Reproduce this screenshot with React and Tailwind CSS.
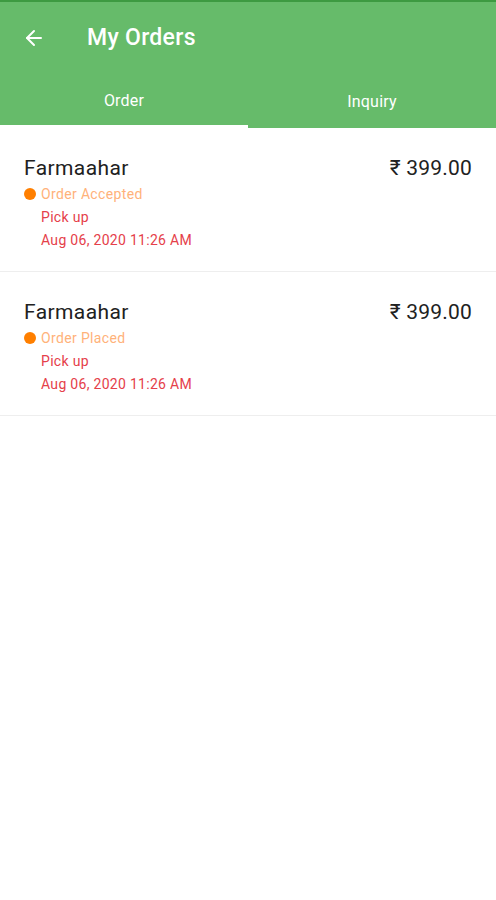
import { ArrowLeft } from "lucide-react";

const orders = [
  { id: 1, name: "Farmaahar", status: "Order Accepted", price: "₹ 399.00", type: "Pick up", date: "Aug 06, 2020 11:26 AM" },
  { id: 2, name: "Farmaahar", status: "Order Placed", price: "₹ 399.00", type: "Pick up", date: "Aug 06, 2020 11:26 AM" },
];

function OrderRow({ order }) {
  return (
    <div className="flex justify-between border-b border-[#eeeeee] pl-6 pr-6 pt-[27px] h-[144px]">
      <div>
        <p className="text-[21px] leading-[26px] tracking-[0.4px] text-[#212121]">{order.name}</p>
        <div className="flex items-center mt-[3px] h-[20px]">
          <span className="w-[12px] h-[12px] rounded-full bg-[#ff7f00] mr-[5px]" />
          <span className="text-[14px] tracking-[0.35px] text-[#ffb27a]">{order.status}</span>
        </div>
        <p className="pl-[17px] text-[14px] leading-[22px] tracking-[0.3px] mt-[2px] text-[#e5404a]">{order.type}</p>
        <p className="pl-[17px] text-[14px] leading-[22px] tracking-[0.3px] mt-[1px] text-[#e5404a]">{order.date}</p>
      </div>
      <p className="text-[21px] leading-[26px] tracking-[0.2px] text-[#212121]">{order.price}</p>
    </div>
  );
}

export default function App() {
  return (
    <div className="w-[496px] h-[900px] bg-white font-['Roboto',sans-serif]">
      {/* Header */}
      <div className="bg-[#66bb6a] border-t-2 border-[#3d9a41]">
        <div className="flex items-center h-[72px] pl-[22px]">
          <ArrowLeft className="w-[24px] h-[24px] text-white" strokeWidth={2} />
          <h1 className="ml-[41px] text-[23px] tracking-[0.3px] font-medium text-white">My Orders</h1>
        </div>
        <div className="grid grid-cols-2 h-[54px]">
          <div className="flex flex-col">
            <div className="flex-1 flex items-center justify-center text-white text-[16px] tracking-[0.2px] pt-[2px]">Order</div>
            <div className="h-[3px] bg-white" />
          </div>
          <div className="flex flex-col">
            <div className="flex-1 flex items-center justify-center text-white text-[16px] tracking-[0.2px] pt-[2px]">Inquiry</div>
            <div className="h-[1px]" />
          </div>
        </div>
      </div>

      {/* Orders */}
      <div>
        {orders.map((o) => (
          <OrderRow key={o.id} order={o} />
        ))}
      </div>
    </div>
  );
}
